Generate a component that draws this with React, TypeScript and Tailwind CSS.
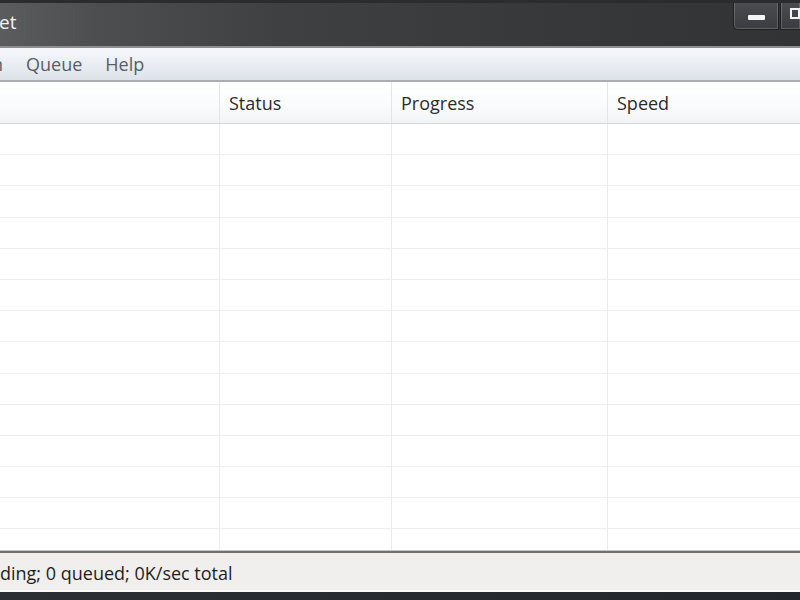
import React from "react";

const columns = [
  { label: "", w: "w-[220px]" },
  { label: "Status", w: "w-[172px]" },
  { label: "Progress", w: "w-[216px]" },
  { label: "Speed", w: "flex-1" },
];

const rows = Array.from({ length: 14 });

export default function App() {
  return (
    <div className="w-[800px] h-[600px] flex flex-col overflow-hidden bg-white font-['Open_Sans','Noto_Sans',sans-serif]">
      {/* Title bar */}
      <div className="h-[46px] shrink-0 flex items-start justify-between bg-[linear-gradient(90deg,#5a5c5e_0%,#4c4e50_12%,#3e4042_35%,#36383a_70%,#313335_100%)] relative">
        <div className="absolute inset-x-0 top-0 h-[3px] bg-[#2a2c2e]" />
        <span className="mt-[10px] -ml-[1px] text-[19px] leading-6 text-[#f2f2f2]">et</span>
        <div className="flex items-start">
          <div className="w-[46px] h-[30px] flex items-center justify-center rounded-bl-[5px] border border-t-0 border-[#1f2123] bg-[linear-gradient(180deg,#4b4d50,#3a3c3f)] shadow-[inset_0_0_0_1px_rgba(255,255,255,0.18)]">
            <span className="block w-[17px] h-[5px] bg-[#f4f4f4] rounded-[1px] mt-[6px]" />
          </div>
          <div className="w-[20px] h-[30px] ml-[1px] flex items-start pt-[8px] pl-[9px] border-l border-b border-[#1f2123] bg-[linear-gradient(180deg,#4b4d50,#3a3c3f)] shadow-[inset_0_0_0_1px_rgba(255,255,255,0.18)]">
            <span className="block w-[10px] h-[11px] border-2 border-[#f4f4f4]" />
          </div>
        </div>
      </div>
      <div className="h-[2px] shrink-0 bg-[#8b8f94]" />

      {/* Menu bar */}
      <div className="h-[32px] shrink-0 flex items-center text-[18px] text-[#585d64] bg-[linear-gradient(180deg,#f5f7fa_0%,#eaeef3_50%,#dde2ea_100%)]">
        <span className="-ml-[8px] w-[12px] overflow-hidden">n</span>
        <span className="ml-[22px]">Queue</span>
        <span className="ml-[23px]">Help</span>
      </div>
      <div className="h-[2px] shrink-0 bg-[#a9adb3]" />

      {/* Column header */}
      <div className="h-[42px] shrink-0 flex bg-[linear-gradient(180deg,#ffffff_0%,#fafbfc_60%,#f1f3f5_100%)] border-b border-[#d6d8db] text-[18px] text-[#2b2b2b]">
        {columns.map((c, i) => (
          <div
            key={i}
            className={`${c.w} flex items-center pt-[1px] pl-[9px] ${i < columns.length - 1 ? "border-r border-[#e3e5e8]" : ""}`}
          >
            {c.label}
          </div>
        ))}
      </div>

      {/* Rows */}
      <div className="flex-1 min-h-0 overflow-hidden">
        {rows.map((_, r) => (
          <div key={r} className="h-[31.2px] flex border-b border-[#eeeeee]">
            {columns.map((c, i) => (
              <div key={i} className={`${c.w} ${i < columns.length - 1 ? "border-r border-[#ececec]" : ""}`} />
            ))}
          </div>
        ))}
      </div>

      {/* Status bar */}
      <div className="h-[1px] shrink-0 bg-[#c4c4c4]" />
      <div className="h-[2px] shrink-0 bg-[#6f7173]" />
      <div className="h-[37px] shrink-0 flex items-center pt-[4px] bg-[#f0efee] text-[18px] text-[#1e1e1e]">
        <span>ding; 0 queued; 0K/sec total</span>
      </div>
      <div className="h-[2px] shrink-0 bg-[#fafafa]" />
      <div className="h-[8px] shrink-0 bg-[linear-gradient(90deg,#2c2f33,#23262a)]" />
    </div>
  );
}
